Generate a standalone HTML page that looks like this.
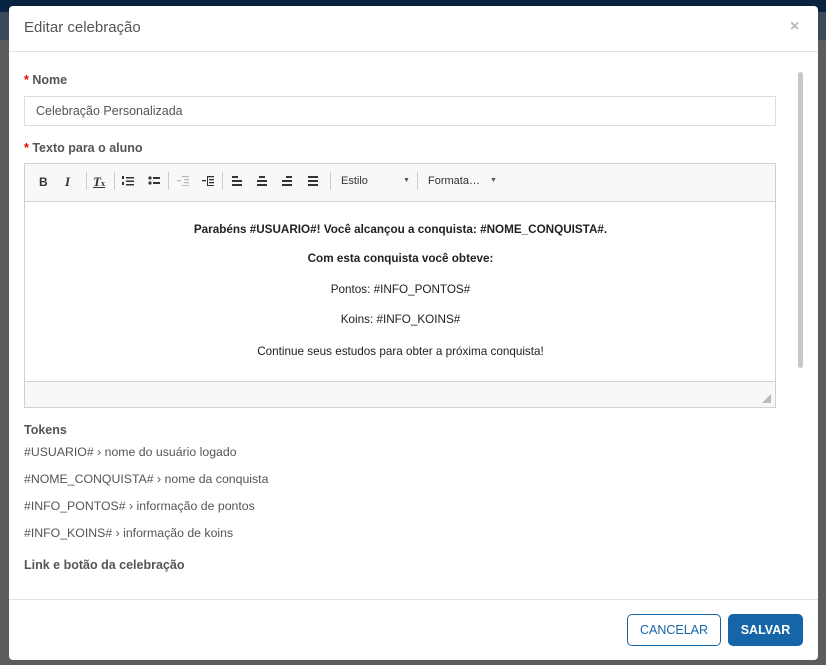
<!DOCTYPE html><html><head><meta charset="utf-8"><style>
*{margin:0;padding:0;box-sizing:border-box}
body{width:826px;height:665px;background:#5c5c5c;position:relative;overflow:hidden;font-family:"Liberation Sans",sans-serif;color:#555}
.a{position:absolute}
.m{left:9px;top:6px;width:809px;height:654px;background:#fff;border-radius:4px}
.lbl{font-size:12.5px;font-weight:bold;color:#555}
.lbl b{color:#e00}
.c{text-align:center;width:751px;left:0;font-size:11.7px;color:#222}
.tk{font-size:12.3px;color:#555;left:24px}
.ic{top:174px;font-size:13px;color:#333}
.sep{top:172px;width:1px;height:18px;background:#ccc}
svg.i{position:absolute;top:176px}
</style></head><body>
<div class="a" style="left:0;top:0;width:826px;height:12px;background:#082340"></div>
<div class="a" style="left:0;top:12px;width:826px;height:28px;background:#3a4a5a"></div>
<div class="a m"></div>
<div class="a" style="left:24px;top:19px;font-size:15px;color:#555">Editar celebração</div>
<div class="a" style="left:790px;top:18px;font-size:16px;color:#bbb;font-weight:bold">×</div>
<div class="a" style="left:9px;top:51px;width:809px;height:1px;background:#e2e2e2"></div>
<div class="a" style="left:798px;top:72px;width:5px;height:296px;background:#c8c8c8;border-radius:3px"></div>
<div class="a lbl" style="left:24px;top:73px"><b>*</b> Nome</div>
<div class="a" style="left:24px;top:96px;width:752px;height:30px;border:1px solid #ddd;font-size:12.5px;color:#555;padding:7px 11px">Celebração Personalizada</div>
<div class="a lbl" style="left:24px;top:141px"><b>*</b> Texto para o aluno</div>
<div class="a" style="left:24px;top:163px;width:752px;height:245px;border:1px solid #d1d1d1;background:#f8f8f8">
<div class="a" style="left:0;top:37px;width:750px;height:181px;background:#fff;border-top:1px solid #d1d1d1;border-bottom:1px solid #d1d1d1">
<div class="a c" style="top:21px;font-weight:bold">Parabéns #USUARIO#! Você alcançou a conquista: #NOME_CONQUISTA#.</div>
<div class="a c" style="top:50px;font-weight:bold">Com esta conquista você obteve:</div>
<div class="a c" style="top:81px">Pontos: #INFO_PONTOS#</div>
<div class="a c" style="top:111px">Koins: #INFO_KOINS#</div>
<div class="a c" style="top:143px">Continue seus estudos para obter a próxima conquista!</div>
</div>
<div class="a" style="right:4px;bottom:4px;width:0;height:0;border-left:9px solid transparent;border-bottom:9px solid #bbb"></div>
</div>
<div class="a ic" style="left:39px;font-weight:bold;font-size:12px;top:175px">B</div>
<div class="a ic" style="left:65px;font-style:italic;font-family:'Liberation Serif',serif;font-weight:bold;top:174px">I</div>
<div class="a sep" style="left:86px"></div>
<div class="a ic" style="left:93px;font-style:italic;font-family:'Liberation Serif',serif;font-weight:bold;text-decoration:underline;top:174px">T<span style="font-size:8px;font-style:normal">x</span></div>
<div class="a sep" style="left:114px"></div>
<svg class="i" style="left:122px" width="12" height="10"><g fill="#333"><rect x="4" y="1" width="8" height="1.5"/><rect x="4" y="4.5" width="8" height="1.5"/><rect x="4" y="8" width="8" height="1.5"/><rect x="0" y="0" width="2" height="3"/><rect x="0" y="6" width="2" height="3"/></g></svg>
<svg class="i" style="left:148px" width="12" height="10"><g fill="#333"><rect x="5" y="1" width="7" height="2"/><rect x="5" y="6" width="7" height="2"/><circle cx="2" cy="2" r="1.6"/><circle cx="2" cy="7" r="1.6"/></g></svg>
<div class="a sep" style="left:168px"></div>
<svg class="i" style="left:177px" width="12" height="10"><g fill="#bbb"><rect x="5" y="0" width="7" height="1.3"/><rect x="7" y="3" width="5" height="1.3"/><rect x="7" y="6" width="5" height="1.3"/><rect x="5" y="9" width="7" height="1"/><rect x="0" y="4" width="4" height="1.3"/></g></svg>
<svg class="i" style="left:202px" width="12" height="10"><g fill="#333"><rect x="5" y="0" width="7" height="1.3"/><rect x="7" y="3" width="5" height="1.3"/><rect x="7" y="6" width="5" height="1.3"/><rect x="5" y="9" width="7" height="1"/><rect x="0" y="4" width="4" height="1.3"/><rect x="5" y="0" width="1" height="10"/></g></svg>
<div class="a sep" style="left:222px"></div>
<svg class="i" style="left:232px" width="11" height="10"><g fill="#333"><rect x="0" y="0" width="6" height="2"/><rect x="0" y="4" width="10" height="2"/><rect x="0" y="8" width="10" height="2"/></g></svg>
<svg class="i" style="left:257px" width="11" height="10"><g fill="#333"><rect x="2" y="0" width="6" height="2"/><rect x="0" y="4" width="10" height="2"/><rect x="0" y="8" width="10" height="2"/></g></svg>
<svg class="i" style="left:282px" width="11" height="10"><g fill="#333"><rect x="4" y="0" width="6" height="2"/><rect x="0" y="4" width="10" height="2"/><rect x="0" y="8" width="10" height="2"/></g></svg>
<svg class="i" style="left:308px" width="11" height="10"><g fill="#333"><rect x="0" y="0" width="10" height="2"/><rect x="0" y="4" width="10" height="2"/><rect x="0" y="8" width="10" height="2"/></g></svg>
<div class="a sep" style="left:330px"></div>
<div class="a" style="left:341px;top:175px;font-size:11px;color:#333">Estilo</div>
<div class="a" style="left:403px;top:177px;font-size:7px;color:#555">▼</div>
<div class="a sep" style="left:417px"></div>
<div class="a" style="left:428px;top:175px;font-size:11px;color:#333">Formata…</div>
<div class="a" style="left:490px;top:177px;font-size:7px;color:#555">▼</div>
<div class="a lbl" style="left:24px;top:423px">Tokens</div>
<div class="a tk" style="top:445px">#USUARIO# › nome do usuário logado</div>
<div class="a tk" style="top:472px">#NOME_CONQUISTA# › nome da conquista</div>
<div class="a tk" style="top:499px">#INFO_PONTOS# › informação de pontos</div>
<div class="a tk" style="top:526px">#INFO_KOINS# › informação de koins</div>
<div class="a lbl" style="left:24px;top:558px">Link e botão da celebração</div>
<div class="a" style="left:9px;top:599px;width:809px;height:1px;background:#e2e2e2"></div>
<div class="a" style="left:627px;top:614px;width:94px;height:32px;border:1px solid #1565a8;border-radius:5px;color:#1565a8;font-size:12.5px;text-align:center;line-height:30px">CANCELAR</div>
<div class="a" style="left:728px;top:614px;width:75px;height:32px;background:#1565a8;border-radius:5px;color:#fff;font-size:12.5px;font-weight:bold;text-align:center;line-height:32px">SALVAR</div>
</body></html>
